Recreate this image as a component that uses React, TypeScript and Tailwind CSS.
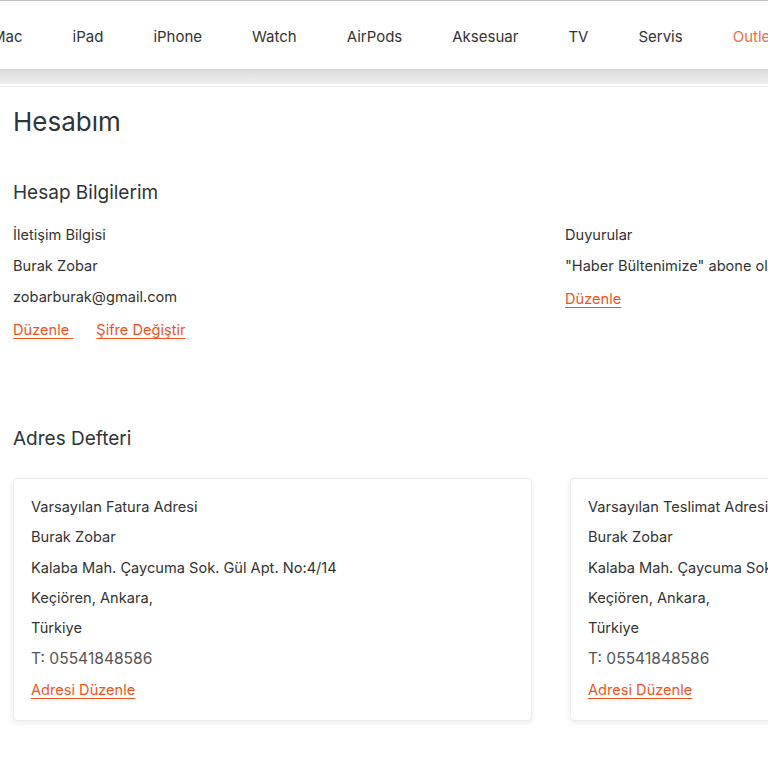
import React from "react";

const navItems = ["Mac", "iPad", "iPhone", "Watch", "AirPods", "Aksesuar", "TV", "Servis", "Outlet"];

function Row({ children, h = "h-[31px]" }: { children: React.ReactNode; h?: string }) {
  return <div className={`${h} flex items-center whitespace-nowrap`}>{children}</div>;
}

function AddressCard({ title }: { title: string }) {
  return (
    <div className="w-[519px] shrink-0 rounded-[4px] border border-[#ececec] bg-white pl-[17px] pt-[14px] pb-[15px] shadow-[0_2px_6px_rgba(0,0,0,0.08)]">
      <Row h="h-[30px]">{title}</Row>
      <Row h="h-[30px]">Burak Zobar</Row>
      <Row h="h-[31px]">Kalaba Mah. Çaycuma Sok. Gül Apt. No:4/14</Row>
      <Row h="h-[30px]">Keçiören, Ankara,</Row>
      <Row h="h-[29px]">Türkiye</Row>
      <Row h="h-[31px]">
        <span className="text-[15.6px] text-[#555]">T: 05541848586</span>
      </Row>
      <Row h="h-[31px]">
        <a className="mt-[3px] text-[#f4511e] underline underline-offset-[3px] decoration-1">Adresi Düzenle</a>
      </Row>
    </div>
  );
}

export default function App() {
  return (
    <div
      className="w-[768px] h-[768px] overflow-hidden bg-white text-[#333] text-[14.6px]"
      style={{ fontFamily: "Inter, 'Liberation Sans', sans-serif" }}
    >
      <div className="border-t border-[#bdbdbd]" />
      <nav className="h-[69px] pt-[5px] flex items-center bg-white border-b border-[#d6d6d6]">
        <div className="flex gap-[50px] -ml-[8px] whitespace-nowrap text-[15px] text-[#333]">
          {navItems.map((n) => (
            <span key={n} className={n === "Outlet" ? "text-[#f26c3a]" : ""}>
              {n}
            </span>
          ))}
        </div>
      </nav>
      <div className="h-[14px] bg-gradient-to-b from-[#dcdcdc] to-[#f0f0f0]" />
      <div className="h-[3px] bg-white border-b border-[#ececec]" />

      <div className="pl-[13px]">
        <h1 className="mt-[19px] text-[26px] leading-[32px] text-[#2f3437]">Hesabım</h1>
        <h2 className="mt-[43px] text-[19px] leading-[24px] text-[#2f3437]">Hesap Bilgilerim</h2>

        <div className="mt-[15px] flex">
          <div className="w-[552px] shrink-0">
            <Row>İletişim Bilgisi</Row>
            <Row>Burak Zobar</Row>
            <Row>zobarburak@gmail.com</Row>
            <Row h="h-[33px]">
              <div className="mt-[3px] flex">
                <a className="text-[#f4511e] underline underline-offset-[3px] decoration-1 whitespace-pre">Düzenle </a>
                <a className="ml-[23px] text-[#f4511e] underline underline-offset-[3px] decoration-1">Şifre Değiştir</a>
              </div>
            </Row>
          </div>
          <div className="shrink-0">
            <Row h="h-[31px]">Duyurular</Row>
            <Row h="h-[32px]">"Haber Bültenimize" abone olmadınız.</Row>
            <Row h="h-[32px]">
              <a className="mt-[2px] text-[#f4511e] underline underline-offset-[3px] decoration-1">Düzenle</a>
            </Row>
          </div>
        </div>

        <h2 className="mt-[81px] text-[19px] leading-[24px] text-[#2f3437]">Adres Defteri</h2>

        <div className="mt-[27px] flex gap-[38px]">
          <AddressCard title="Varsayılan Fatura Adresi" />
          <AddressCard title="Varsayılan Teslimat Adresi" />
        </div>
      </div>
    </div>
  );
}
